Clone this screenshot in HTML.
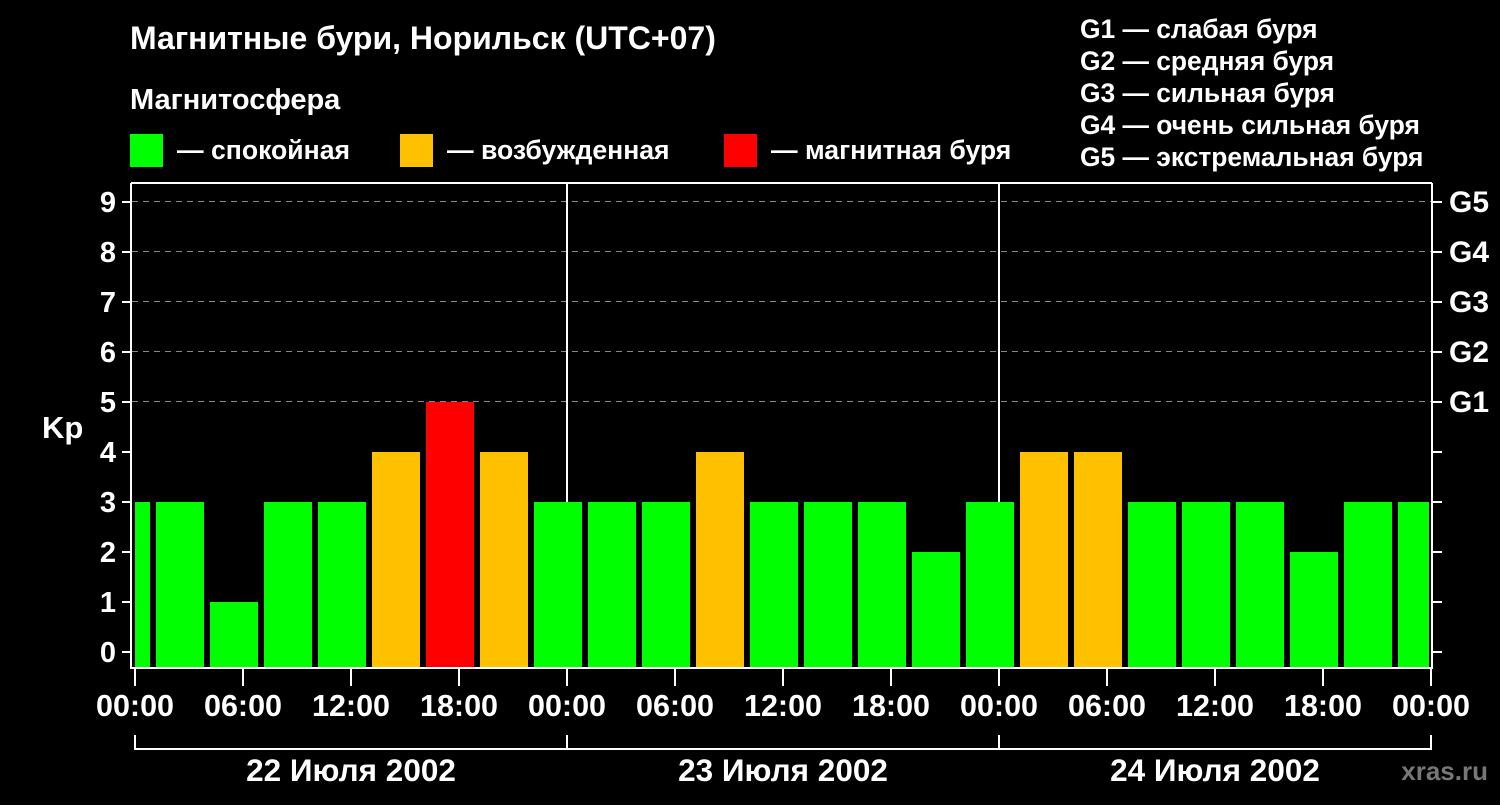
<!DOCTYPE html><html><head><meta charset="utf-8"><style>body{margin:0;background:#000;width:1500px;height:800px;overflow:hidden}</style></head><body>
<svg width="1500" height="800" xmlns="http://www.w3.org/2000/svg" font-family="Liberation Sans, Arial, sans-serif" font-weight="bold" fill="#fff">
<rect width="1500" height="800" fill="#000"/>
<text x="130" y="49" font-size="32">Магнитные бури, Норильск (UTC+07)</text>
<text x="130" y="109" font-size="29">Магнитосфера</text>
<rect x="130" y="134" width="33" height="33" fill="#00ff00"/><text x="177" y="159" font-size="26.6">— спокойная</text>
<rect x="400" y="134" width="33" height="33" fill="#ffc000"/><text x="447" y="159" font-size="26.6">— возбужденная</text>
<rect x="724" y="134" width="33" height="33" fill="#ff0000"/><text x="771" y="159" font-size="26.6">— магнитная буря</text>
<g font-size="26.4"><text x="1080" y="38">G1 — слабая буря</text><text x="1080" y="70">G2 — средняя буря</text><text x="1080" y="102">G3 — сильная буря</text><text x="1080" y="134">G4 — очень сильная буря</text><text x="1080" y="166">G5 — экстремальная буря</text></g>
<g stroke="#888" stroke-width="1" stroke-dasharray="6,5"><line x1="132" y1="201.5" x2="1431" y2="201.5"/><line x1="132" y1="251.5" x2="1431" y2="251.5"/><line x1="132" y1="301.5" x2="1431" y2="301.5"/><line x1="132" y1="351.5" x2="1431" y2="351.5"/><line x1="132" y1="401.5" x2="1431" y2="401.5"/></g>
<g id="bars">
<rect x="135" y="502" width="15" height="166" fill="#00ff00"/>
</g>
<script>
var v=[3,1,3,3,4,5,4,3,3,3,4,3,3,3,2,3,4,4,3,3,3,2,3,3],g=document.getElementById('bars');
v.forEach(function(k,i){var x=156+54*i,w=Math.min(48,1429-x),r=document.createElementNS('http://www.w3.org/2000/svg','rect');r.setAttribute('x',x);r.setAttribute('y',652-50*k);r.setAttribute('width',w);r.setAttribute('height',16+50*k);r.setAttribute('fill',k>=5?'#ff0000':k==4?'#ffc000':'#00ff00');g.appendChild(r);});
</script>
<g stroke="#fff" stroke-width="2" fill="none">
<line x1="131" y1="183" x2="131" y2="669"/><line x1="1432" y1="183" x2="1432" y2="669"/><line x1="131" y1="668" x2="1432" y2="668"/><line x1="131" y1="183" x2="1432" y2="183"/>
<line x1="567" y1="183" x2="567" y2="502"/><line x1="999" y1="183" x2="999" y2="502"/>
<path d="M122 202H131M122 252H131M122 302H131M122 352H131M122 402H131M122 452H131M122 502H131M122 552H131M122 602H131M122 652H131"/>
<path d="M1432 202H1442M1432 252H1442M1432 302H1442M1432 352H1442M1432 402H1442M1432 452H1442M1432 502H1442M1432 552H1442M1432 602H1442M1432 652H1442"/>
<path d="M135 668V686M243 668V686M351 668V686M459 668V686M567 668V686M675 668V686M783 668V686M891 668V686M999 668V686M1107 668V686M1215 668V686M1323 668V686M1431 668V686"/>
<path d="M135 735V749H1431V735M567 735V749M999 735V749"/>
</g>
<g font-size="29" text-anchor="end"><text x="116" y="212">9</text><text x="116" y="262">8</text><text x="116" y="312">7</text><text x="116" y="362">6</text><text x="116" y="412">5</text><text x="116" y="462">4</text><text x="116" y="512">3</text><text x="116" y="562">2</text><text x="116" y="612">1</text><text x="116" y="662">0</text></g>
<text x="42" y="438" font-size="31">Kp</text>
<g font-size="30"><text x="1449" y="212">G5</text><text x="1449" y="262">G4</text><text x="1449" y="312">G3</text><text x="1449" y="362">G2</text><text x="1449" y="412">G1</text></g>
<g font-size="30.5" text-anchor="middle"><text x="135" y="716">00:00</text><text x="243" y="716">06:00</text><text x="351" y="716">12:00</text><text x="459" y="716">18:00</text><text x="567" y="716">00:00</text><text x="675" y="716">06:00</text><text x="783" y="716">12:00</text><text x="891" y="716">18:00</text><text x="999" y="716">00:00</text><text x="1107" y="716">06:00</text><text x="1215" y="716">12:00</text><text x="1323" y="716">18:00</text><text x="1431" y="716">00:00</text></g>
<g font-size="31.5" text-anchor="middle"><text x="351" y="781">22 Июля 2002</text><text x="783" y="781">23 Июля 2002</text><text x="1215" y="781">24 Июля 2002</text></g>
<text x="1488" y="780" font-size="26" fill="#777" text-anchor="end">xras.ru</text>
</svg></body></html>
